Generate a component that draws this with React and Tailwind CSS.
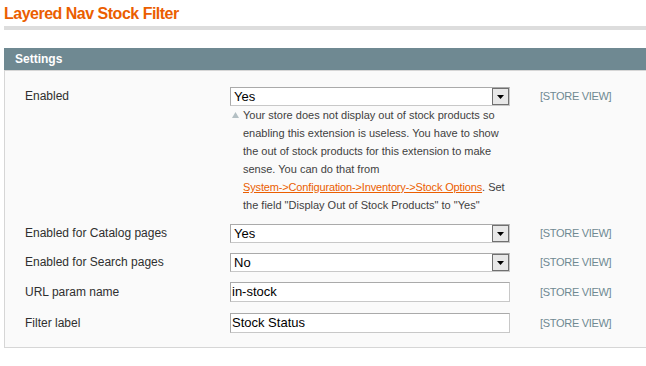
import React from "react";

const font = { fontFamily: '"Liberation Sans", Arial, Helvetica, sans-serif' };

function SelectBox({ value }) {
  return (
    <div className="flex h-[19px] w-[280px] items-center border border-solid border-t-[#aaa] border-l-[#aaa] border-r-[#c8c8c8] border-b-[#c8c8c8] bg-white">
      <span className="flex-1 pl-[3px] text-[13px] leading-[17px] text-black">{value}</span>
      <div className="flex h-[17px] w-[17px] items-center justify-center border border-solid border-[#707070] bg-[#e8e8e8]">
        <svg width="7" height="4" viewBox="0 0 7 4">
          <polygon points="0,0 7,0 3.5,4" fill="#000" />
        </svg>
      </div>
    </div>
  );
}

function TextBox({ value }) {
  return (
    <div className="flex h-[20px] w-[280px] items-center border border-solid border-t-[#aaa] border-l-[#aaa] border-r-[#c8c8c8] border-b-[#c8c8c8] bg-white">
      <span className="pl-[1px] text-[13px] leading-[18px] text-black">{value}</span>
    </div>
  );
}

function Row({ label, h, children, className = "" }) {
  return (
    <div className={"flex items-start " + className}>
      <div
        className="w-[225px] shrink-0 pl-[20px] text-[12px] text-[#2f2f2f]"
        style={{ lineHeight: h + "px" }}
      >
        {label}
      </div>
      <div className="w-[280px] shrink-0">{children}</div>
      <div
        className="ml-[30px] text-[11px] uppercase tracking-[-0.3px] text-[#6f8992]"
        style={{ lineHeight: h + "px" }}
      >
        [STORE VIEW]
      </div>
    </div>
  );
}

export default function App() {
  return (
    <div className="h-[366px] w-[646px] overflow-hidden bg-white pl-[4px]" style={font}>
      <div className="h-[26px] pt-[4px] text-[16px] font-bold leading-[20px] tracking-[-0.5px] text-[#eb5e00]">
        Layered Nav Stock Filter
      </div>
      <div className="h-[4px] bg-[#dddddd]" />
      <div className="mt-[18px] h-[22px] bg-[#6f8992] pl-[11px] text-[12px] font-bold leading-[22px] text-white">
        Settings
      </div>
      <div className="border-l border-b border-t border-solid border-[#d6d6d6] bg-[#fafafa] pt-[16px] pb-[14px]">
        <Row label="Enabled" h={19}>
          <SelectBox value="Yes" />
          <div className="flex pl-[2px] text-[11px] leading-[18px] text-[#3f3f3f]">
            <svg width="7" height="6" viewBox="0 0 7 6" className="mt-[6px] mr-[4px] shrink-0">
              <polygon points="3.5,0 7,6 0,6" fill="#b3bfc3" />
            </svg>
            <div className="w-[272px]">
              Your store does not display out of stock products so enabling this extension is useless. You have to show the out of stock products for this extension to make sense. You can do that from{" "}
              <span className="whitespace-nowrap">
                <a className="tracking-[-0.15px] text-[#eb5e00] underline" href="#">System-&gt;Configuration-&gt;Inventory-&gt;Stock Options</a>. Set
              </span>{" "}
              the field "Display Out of Stock Products" to "Yes"
            </div>
          </div>
        </Row>
        <Row label="Enabled for Catalog pages" h={19} className="mt-[10px]">
          <SelectBox value="Yes" />
        </Row>
        <Row label="Enabled for Search pages" h={19} className="mt-[10px]">
          <SelectBox value="No" />
        </Row>
        <Row label="URL param name" h={20} className="mt-[10px]">
          <TextBox value="in-stock" />
        </Row>
        <Row label="Filter label" h={20} className="mt-[11px]">
          <TextBox value="Stock Status" />
        </Row>
      </div>
    </div>
  );
}
